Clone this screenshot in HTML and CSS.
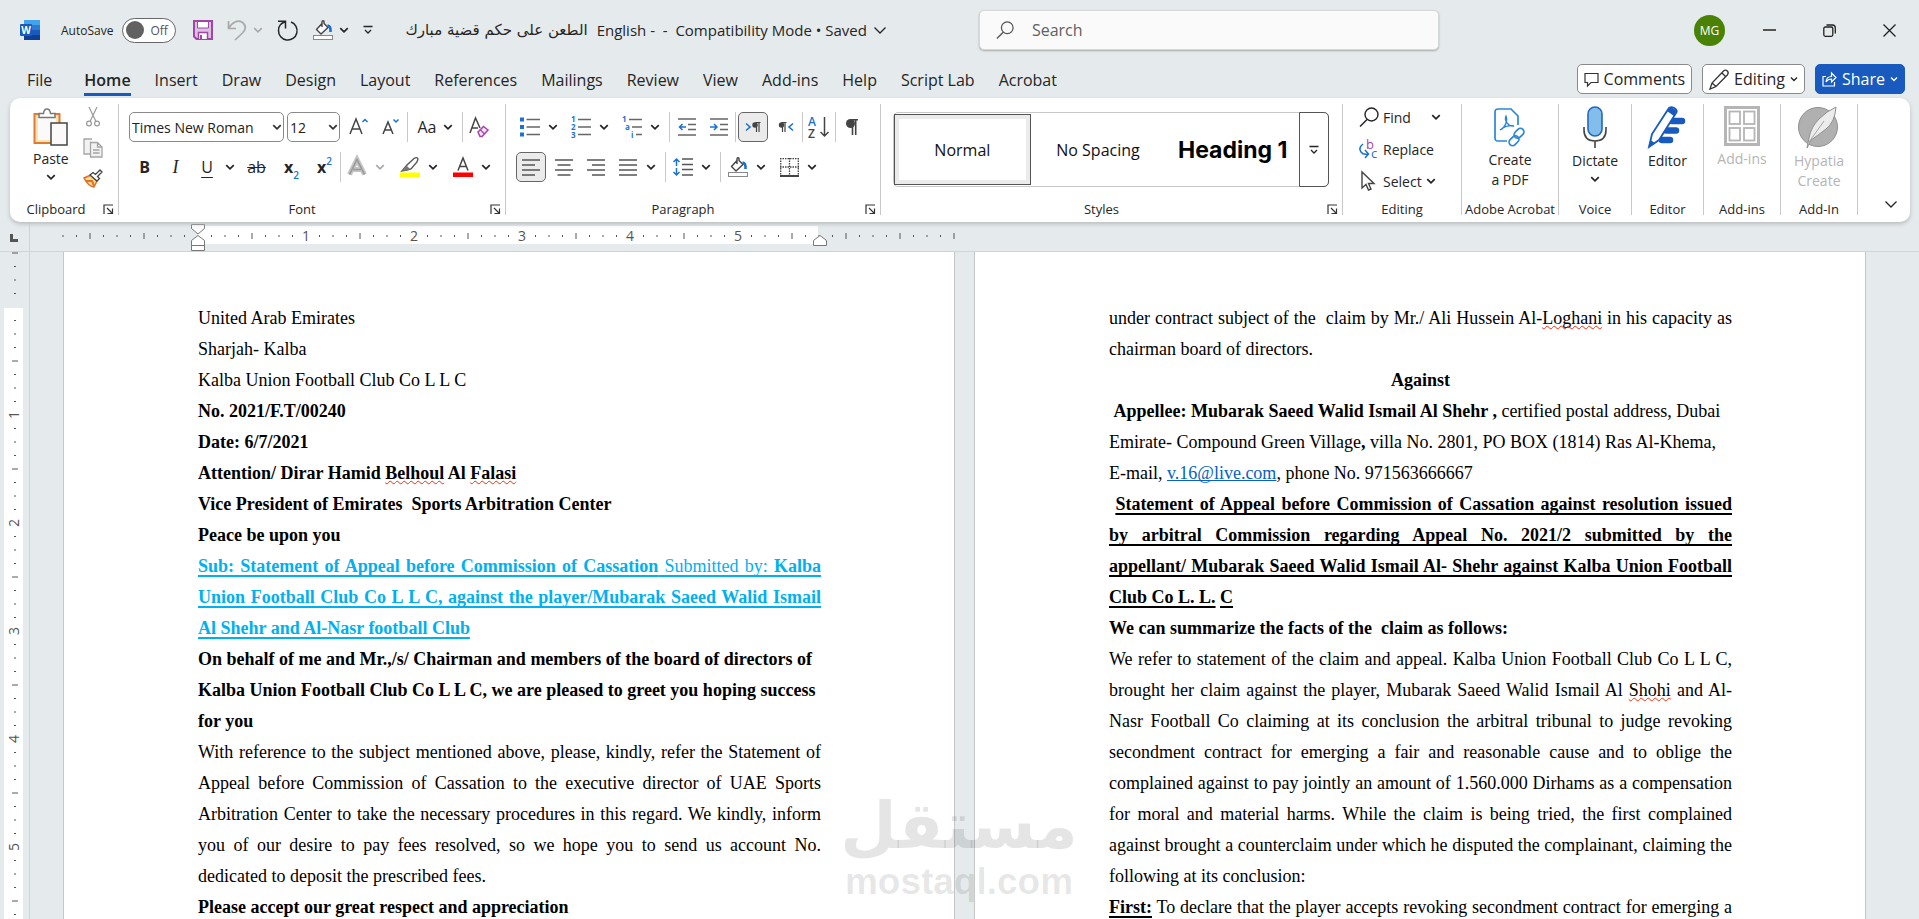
FILE: index.html
```
<!DOCTYPE html>
<html lang="en">
<head>
    <meta charset="UTF-8">
    <title>الطعن على حكم قضية مبارك English - Word</title>
    <link rel="stylesheet" href="styles.css">
</head>
<body>
    <!-- shared icons -->
    <svg class="defs" width="0" height="0">
        <symbol id="chev" viewBox="0 0 8 8"><path d="M1 2.5 4 5.5 7 2.5" fill="none" stroke="currentColor" stroke-width="1.4"/></symbol>
        <symbol id="chev-big" viewBox="0 0 14 14"><path d="M1.500 4.500 7 10 12.500 4.500" fill="none" stroke="currentColor" stroke-width="1.300"/></symbol>
        <symbol id="more" viewBox="0 0 10 10"><path d="M0.500 1.500H9.500M2 5 5 8 8 5" fill="none" stroke="currentColor" stroke-width="1.300"/></symbol>
        <symbol id="launch" viewBox="0 0 11 11"><path d="M1 10V1H10M4 4 9 9M9.500 4.500V9.500H4.500" fill="none" stroke="#333" stroke-width="1.200"/></symbol>
        <symbol id="bucket" viewBox="0 0 20 20">
            <path d="M9 3.500 3.500 9.500 8 14 15 7.500 11 3.500V2Q11 .7 10 .7T9 2V7" fill="#fff" stroke="#444" stroke-width="1.400" stroke-linejoin="round"/>
            <path d="M14.500 5.500Q18 6 17.500 12" fill="none" stroke="#1a6fd0" stroke-width="2.600"/>
            <rect x=".5" y="15.500" width="19" height="4" fill="#fff" stroke="#888"/>
        </symbol>
        <symbol id="glass" viewBox="0 0 20 20"><circle cx="12.500" cy="7.500" r="6.500" fill="none" stroke="currentColor" stroke-width="1.400"/><path d="M8 12.500 1 19.500" stroke="currentColor" stroke-width="1.500"/></symbol>
    </svg>

    <header class="titlebar">
        <svg class="word-logo" width="20" height="20" viewBox="0 0 20 20">
            <rect x="4" y="0" width="16" height="5" fill="#41a5ee"/>
            <rect x="4" y="5" width="16" height="5" fill="#2b7cd3"/>
            <rect x="4" y="10" width="16" height="5" fill="#185abd"/>
            <rect x="4" y="15" width="16" height="5" fill="#103f91"/>
            <rect x="0" y="4" width="12" height="12" rx="1" fill="#185abd"/>
            <text x="6" y="14" class="logo-letter">W</text>
        </svg>
        <label class="autosave">AutoSave
            <span class="switch"><input type="checkbox"><i></i>Off</span>
        </label>
        <div class="qat">
            <button class="qbtn" aria-label="Save">
                <svg width="20" height="20" viewBox="0 0 20 20"><path d="M1 1H19V19H3.500L1 16.500Z" fill="#d9c3dd" stroke="#a344ab" stroke-width="2"/><path d="M4.500 1.500H15.500V8H4.500Z" fill="#fff" stroke="#a344ab"/><path d="M5.500 19V12.500H14.500V19" fill="#fff" stroke="#a344ab" stroke-width="1.500"/><path d="M8 15V19" stroke="#a344ab" stroke-width="2"/></svg>
            </button>
            <button class="qbtn dim" aria-label="Undo">
                <svg width="20" height="21" viewBox="0 0 20 21"><path d="M1.500 1V8.500H9M1.500 8.500C5 2 11-.5 15.500 2.500 20 6 18.500 10 15.500 13L8 20" fill="none" stroke="currentColor" stroke-width="1.700"/></svg>
                <svg width="10" height="10"><use href="#chev"/></svg>
            </button>
            <button class="qbtn" aria-label="Repeat">
                <svg width="22" height="21" viewBox="0 0 22 21"><path d="M1 1.200H8.500V8.500M8.500 1.800C4 3 1.500 6.500 1.500 10.500A9.300 9.300 0 1 0 14 2" fill="none" stroke="currentColor" stroke-width="1.500"/></svg>
            </button>
            <button class="qbtn" aria-label="Shading">
                <svg width="20" height="20"><use href="#bucket"/></svg>
                <svg width="10" height="10"><use href="#chev"/></svg>
            </button>
            <button class="qbtn" aria-label="Customize Quick Access Toolbar"><svg width="10" height="10"><use href="#more"/></svg></button>
        </div>
        <button class="doc-title"><bdi class="ar" lang="ar">الطعن على حكم قضية مبارك</bdi><span>English -&nbsp; -&nbsp; Compatibility Mode • Saved</span><svg width="14" height="14"><use href="#chev-big"/></svg></button>
        <label class="search">
            <svg width="18" height="18"><use href="#glass"/></svg>
            <input type="text" placeholder="Search" aria-label="Search">
        </label>
        <div class="window-controls">
            <button class="avatar">MG</button>
            <button aria-label="Minimize"><svg width="13" height="13" viewBox="0 0 13 13"><path d="M0 6H13" stroke="#222" stroke-width="1.500"/></svg></button>
            <button aria-label="Restore"><svg width="13" height="13" viewBox="0 0 13 13" fill="none" stroke="#222" stroke-width="1.300"><rect x=".8" y="3" width="9" height="9.300" rx="1.500"/><path d="M3.500 1H9.500Q12.300 1 12.300 4V9.500"/></svg></button>
            <button aria-label="Close"><svg width="13" height="13" viewBox="0 0 13 13"><path d="M.5.5 12.500 12.500M12.500.5.5 12.500" stroke="#222" stroke-width="1.300"/></svg></button>
        </div>
    </header>

    <nav class="tabs">
        <a href="#" class="file">File</a>
        <a href="#" class="active">Home</a>
        <a href="#">Insert</a>
        <a href="#">Draw</a>
        <a href="#">Design</a>
        <a href="#">Layout</a>
        <a href="#">References</a>
        <a href="#">Mailings</a>
        <a href="#">Review</a>
        <a href="#">View</a>
        <a href="#">Add-ins</a>
        <a href="#">Help</a>
        <a href="#">Script Lab</a>
        <a href="#">Acrobat</a>
        <div class="tab-actions">
            <button class="action"><svg width="15" height="15" viewBox="0 0 15 15"><path d="M1 1.500H14V10.500H7L3.500 14V10.500H1Z" fill="none" stroke="#333" stroke-width="1.200"/></svg>Comments</button>
            <button class="action"><svg width="20" height="21" viewBox="0 0 20 21"><path d="M1 20 3 14 14.500 2Q16.500.3 18.300 2T18.300 6L7 17.500ZM13 4 16.500 7.500M3 14 7 17.500" fill="none" stroke="#333" stroke-width="1.300"/></svg>Editing<svg width="8" height="8"><use href="#chev"/></svg></button>
            <button class="action share"><svg width="15" height="16" viewBox="0 0 15 16"><path d="M4 5.500H1V15H12.500V11M4 11Q4.500 5.500 9.500 5.500V2L14 6.500 9.500 11V8Q6 8 4 11Z" fill="none" stroke="#fff" stroke-width="1.200"/></svg>Share<svg width="8" height="8"><use href="#chev"/></svg></button>
        </div>
    </nav>

    <section class="ribbon">
        <div class="group clipboard">
            <div class="tools">
                <button class="big paste">
                    <svg width="35" height="38" viewBox="0 0 35 38"><rect x="1.500" y="6" width="25" height="29" fill="#fbe3b2" stroke="#e07b34" stroke-width="2"/><rect x="5" y="9" width="18" height="23" fill="#fafafa"/><path d="M6 9.500V5.500H10.500Q11 1 14 1T17.500 5.500H22V9.500Z" fill="#fff" stroke="#777" stroke-width="1.500"/><rect x="18" y="15" width="16" height="22" fill="#fafafa" stroke="#444" stroke-width="1.500"/></svg>
                    Paste
                    <svg width="10" height="10"><use href="#chev"/></svg>
                </button>
                <div class="stack">
                    <button aria-label="Cut"><svg width="14" height="20" viewBox="0 0 14 20" fill="none" stroke="#9a9a9a" stroke-width="1.200"><path d="M3 0 10 14.500M11 0 4 14.500"/><circle cx="3" cy="16.500" r="2.400"/><circle cx="11" cy="16.500" r="2.400"/></svg></button>
                    <button aria-label="Copy"><svg width="20" height="20" viewBox="0 0 20 20" fill="#f2f2f2" stroke="#a5a5a5" stroke-width="1.300"><path d="M7 16H1V1H9"/><path d="M7.500 4.500H14.500L19 9V19H7.500ZM14.500 4.500V9H19M10 12H16.500M10 15H16.500"/></svg></button>
                    <button aria-label="Format Painter"><svg width="20" height="19" viewBox="0 0 20 19"><path d="M1 9 8 6 14 12 11 18Q5 17 1 9Z" fill="#fbd98f" stroke="#e0702c" stroke-width="1.500"/><path d="M3 12 9 12 11 17" fill="none" stroke="#e0702c" stroke-width="2"/><path d="M7 6 10 3.500 12.500 5.500 17 1 19 3 14.500 7.500 16.500 9.500 14 12Z" fill="#fff" stroke="#444" stroke-width="1.300"/></svg></button>
                </div>
            </div>
            <div class="caption">Clipboard<button class="launcher" aria-label="Clipboard options"><svg width="11" height="11"><use href="#launch"/></svg></button></div>
        </div>

        <div class="group font">
            <div class="tools rows">
                <div class="row">
                    <select class="combo name" aria-label="Font"><option>Times New Roman</option></select>
                    <select class="combo size" aria-label="Font size"><option>12</option></select>
                    <button class="tool" aria-label="Grow font"><svg width="20" height="20" viewBox="0 0 20 20" fill="none"><path d="M1 17 7 2 13 17M3 12H11" stroke="#444" stroke-width="1.500"/><path d="M13.500 5 16 2.500 18.500 5" stroke="#1a73d0" stroke-width="1.500"/></svg></button>
                    <button class="tool" aria-label="Shrink font"><svg width="20" height="20" viewBox="0 0 20 20" fill="none"><path d="M2 17 7 5 12 17M4 13H10" stroke="#444" stroke-width="1.500"/><path d="M12.500 2.500 15 5 17.500 2.500" stroke="#1a73d0" stroke-width="1.500"/></svg></button>
                    <i class="sep"></i>
                    <button class="tool split change-case">Aa<svg width="10" height="10"><use href="#chev"/></svg></button>
                    <i class="sep"></i>
                    <button class="tool" aria-label="Clear formatting"><svg width="20" height="22" viewBox="0 0 20 22" fill="none"><path d="M1 17 6.500 2 11 12M3 12H9" stroke="#444" stroke-width="1.500"/><path d="M9 16 14.500 10.500 19 14 13 20.500H11Z" fill="#f3e3f5" stroke="#a344ab" stroke-width="1.500"/><path d="M11 13.500 15.500 18" stroke="#a344ab" stroke-width="1.300"/></svg></button>
                </div>
                <div class="row">
                    <button class="tool thin"><b>B</b></button>
                    <button class="tool thin italic">I</button>
                    <button class="tool split"><span class="slot"><u>U</u></span><svg width="10" height="10"><use href="#chev"/></svg></button>
                    <button class="tool wide"><s>ab</s></button>
                    <button class="tool wide"><b>x</b><sub>2</sub></button>
                    <button class="tool thin"><b>x</b><sup>2</sup></button>
                    <i class="sep"></i>
                    <button class="tool split dim" aria-label="Text effects"><span class="slot"><svg width="20" height="20" viewBox="0 0 20 20"><path d="M2.500 17.500 10 2.500 17.500 17.500M6 12.500H14" fill="none" stroke="#c4c4c4" stroke-width="5"/><path d="M2.500 17.500 10 2.500 17.500 17.500M6 12.500H14" fill="none" stroke="#999" stroke-width="1.600"/></svg></span><svg width="10" height="10"><use href="#chev"/></svg></button>
                    <button class="tool split apart" aria-label="Highlight"><span class="slot"><svg width="20" height="20" viewBox="0 0 20 20"><path d="M2 14 7 8 14 1.500Q17-.5 18 2L17 5 11 12 7 13Z" fill="#fff" stroke="#555" stroke-width="1.400"/><path d="M2 14 6.500 8.500 10.500 12.500 7 13.500Z" fill="#777"/><rect y="15.500" width="20" height="4.500" fill="#ff0"/></svg></span><svg width="10" height="10"><use href="#chev"/></svg></button>
                    <button class="tool split apart" aria-label="Font color"><span class="slot"><svg width="20" height="20" viewBox="0 0 20 20"><path d="M5 13.500 10 1 15 13.500M6.500 9.500H13.500" fill="none" stroke="#444" stroke-width="1.500"/><rect y="15.500" width="20" height="4.500" fill="#f00"/></svg></span><svg width="10" height="10"><use href="#chev"/></svg></button>
                </div>
            </div>
            <div class="caption">Font<button class="launcher" aria-label="Font options"><svg width="11" height="11"><use href="#launch"/></svg></button></div>
        </div>

        <div class="group paragraph">
            <div class="tools rows">
                <div class="row">
                    <button class="tool split" aria-label="Bullets"><span class="slot"><svg width="20" height="20" viewBox="0 0 20 20"><path d="M0 2.500H4M0 10H4M0 17.500H4" stroke="#1a73d0" stroke-width="4"/><path d="M6.500 2.500H20M6.500 10H20M6.500 17.500H20" stroke="#666" stroke-width="1.500"/></svg></span><svg width="10" height="10"><use href="#chev"/></svg></button>
                    <button class="tool split gap" aria-label="Numbering"><span class="slot"><svg width="20" height="22" viewBox="0 0 20 22"><text class="mini" x="0" y="6">1</text><text class="mini" x="0" y="14">2</text><text class="mini" x="0" y="22">3</text><path d="M7 3.500H20M7 11H20M7 18.500H20" stroke="#666" stroke-width="1.500"/></svg></span><svg width="10" height="10"><use href="#chev"/></svg></button>
                    <button class="tool split gap" aria-label="Multilevel list"><span class="slot"><svg width="20" height="22" viewBox="0 0 20 22"><text class="mini" x="0" y="6">1</text><text class="mini" x="3" y="14">a</text><text class="mini" x="9" y="22">i</text><path d="M7 3.500H20M10 11H20M14 18.500H20" stroke="#666" stroke-width="1.500"/></svg></span><svg width="10" height="10"><use href="#chev"/></svg></button>
                    <i class="sep after-split"></i>
                    <button class="tool" aria-label="Decrease indent"><svg width="18" height="18" viewBox="0 0 18 18"><path d="M0 1H18M10 6.500H18M10 11.500H18M0 17H18" stroke="#666" stroke-width="1.500"/><path d="M8 9H1.500M4.500 6 1.500 9 4.500 12" fill="none" stroke="#1a73d0" stroke-width="1.500"/></svg></button>
                    <button class="tool" aria-label="Increase indent"><svg width="18" height="18" viewBox="0 0 18 18"><path d="M0 1H18M10 6.500H18M10 11.500H18M0 17H18" stroke="#666" stroke-width="1.500"/><path d="M0 9H7M4 6 7 9 4 12" fill="none" stroke="#1a73d0" stroke-width="1.500"/></svg></button>
                    <i class="sep"></i>
                    <button class="tool pressed" aria-label="Left-to-right"><svg width="16" height="12" viewBox="0 0 16 12"><path d="M1 2.500 5 6 1 9.500" fill="none" stroke="#1a73d0" stroke-width="1.600"/><path d="M15.500 1.500H10.500M11.500 1V11M14 1V11" stroke="#444" stroke-width="1.200"/><circle cx="10" cy="4" r="2.700" fill="#444"/></svg></button>
                    <button class="tool" aria-label="Right-to-left"><svg width="16" height="12" viewBox="0 0 16 12"><path d="M15 2.500 11 6 15 9.500" fill="none" stroke="#1a73d0" stroke-width="1.600"/><path d="M8.500 1.500H3.500M4.500 1V11M7 1V11" stroke="#444" stroke-width="1.200"/><circle cx="3.500" cy="4" r="2.700" fill="#444"/></svg></button>
                    <i class="sep"></i>
                    <button class="tool" aria-label="Sort"><svg width="22" height="22" viewBox="0 0 22 22"><text class="sort-a" x="0" y="10">A</text><text class="sort-z" x="0" y="22">Z</text><path d="M16.500 1V20M12.500 16 16.500 20 20.500 16" fill="none" stroke="#444" stroke-width="1.500"/></svg></button>
                    <i class="sep"></i>
                    <button class="tool" aria-label="Show paragraph marks"><svg width="12" height="16" viewBox="0 0 12 16"><path d="M12 .8H5M6.500 0V16M9.700 0V16" stroke="#444" stroke-width="1.600"/><circle cx="4.500" cy="4.500" r="4.500" fill="#444"/></svg></button>
                </div>
                <div class="row">
                    <button class="tool pressed" aria-label="Align left"><svg width="18" height="17" viewBox="0 0 18 17"><path d="M0 1H18M0 6H13M0 11H18M0 16H13" stroke="#555" stroke-width="1.500"/></svg></button>
                    <button class="tool" aria-label="Center"><svg width="18" height="17" viewBox="0 0 18 17"><path d="M0 1H18M2.500 6H15.500M0 11H18M2.500 16H15.500" stroke="#555" stroke-width="1.500"/></svg></button>
                    <button class="tool" aria-label="Align right"><svg width="18" height="17" viewBox="0 0 18 17"><path d="M0 1H18M5 6H18M0 11H18M5 16H18" stroke="#555" stroke-width="1.500"/></svg></button>
                    <button class="tool split" aria-label="Justify"><span class="slot"><svg width="18" height="17" viewBox="0 0 18 17"><path d="M0 1H18M0 6H18M0 11H18M0 16H18" stroke="#555" stroke-width="1.500"/></svg></span><svg width="10" height="10"><use href="#chev"/></svg></button>
                    <i class="sep after-split"></i>
                    <button class="tool split" aria-label="Line spacing"><span class="slot"><svg width="20" height="18" viewBox="0 0 20 18"><path d="M9 1H20M9 6.500H20M9 11.500H20M9 17H20" stroke="#555" stroke-width="1.500"/><path d="M3.500 8V1M.5 4 3.500 1 6.500 4M3.500 10V17M.5 14 3.500 17 6.500 14" fill="none" stroke="#1a73d0" stroke-width="1.500"/></svg></span><svg width="10" height="10"><use href="#chev"/></svg></button>
                    <i class="sep after-split"></i>
                    <button class="tool split" aria-label="Shading"><span class="slot"><svg width="20" height="20"><use href="#bucket"/></svg></span><svg width="10" height="10"><use href="#chev"/></svg></button>
                    <button class="tool split gap" aria-label="Borders"><span class="slot"><svg width="19" height="19" viewBox="0 0 19 19"><path d="M.7 0V17M9.500 0V17M18.300 0V17M0 .7H19M0 9H19" stroke="#444" stroke-width="1.300" stroke-dasharray="1.500 1"/><path d="M0 18H19" stroke="#444" stroke-width="2"/></svg></span><svg width="10" height="10"><use href="#chev"/></svg></button>
                </div>
            </div>
            <div class="caption">Paragraph<button class="launcher" aria-label="Paragraph options"><svg width="11" height="11"><use href="#launch"/></svg></button></div>
        </div>

        <div class="group styles">
            <div class="tools">
                <div class="gallery">
                    <button class="style selected">Normal</button>
                    <button class="style">No Spacing</button>
                    <button class="style heading">Heading 1</button>
                    <button class="gallery-more" aria-label="More styles"><svg width="10" height="10"><use href="#more"/></svg></button>
                </div>
            </div>
            <div class="caption">Styles<button class="launcher" aria-label="Styles options"><svg width="11" height="11"><use href="#launch"/></svg></button></div>
        </div>

        <div class="group editing">
            <div class="tools list">
                <button><svg width="20" height="20"><use href="#glass"/></svg>Find<svg class="far" width="10" height="10"><use href="#chev"/></svg></button>
                <button><svg width="20" height="20" viewBox="0 0 20 20"><text class="rep-b" x="7" y="10">b</text><text class="rep-c" x="12" y="19">c</text><path d="M4 5Q-1 9 2 13 4 16 9 15M6 11 9.500 15 6 19" fill="none" stroke="#1a73d0" stroke-width="1.500"/></svg>Replace</button>
                <button><svg width="20" height="20" viewBox="0 0 20 20"><path d="M3 1V17L7 13.500 9.500 19 12 18 9.500 12.500H15Z" fill="#fff" stroke="#444" stroke-width="1.400"/></svg>Select<svg width="10" height="10"><use href="#chev"/></svg></button>
            </div>
            <div class="caption">Editing</div>
        </div>

        <div class="group acrobat">
            <div class="tools">
                <button class="big pdf">
                    <svg width="32" height="39" viewBox="0 0 32 39" fill="none" stroke="#2a86d9" stroke-width="1.700"><path d="M13 33H4Q1 33 1 30V4Q1 1 4 1H17L24 8V17"/><path d="M6 22C11 20 14 13 12 8 10 12 14 19 20 18 15 17 10 19 6 22Z" stroke-width="1.300"/><rect x="20" y="22" width="11" height="7" rx="3.500" transform="rotate(-45 25 26)"/><rect x="14" y="29" width="11" height="7" rx="3.500" transform="rotate(-45 20 32)"/></svg>
                    <span>Create<br>a PDF</span>
                </button>
            </div>
            <div class="caption">Adobe Acrobat</div>
        </div>
        <div class="group voice">
            <div class="tools">
                <button class="big">
                    <svg width="24" height="42" viewBox="0 0 24 42" fill="none"><path d="M1 21V24Q1 35 12 35T23 24V21M12 35V42" stroke="#444" stroke-width="1.600"/><rect x="5" y="1" width="14" height="29" rx="7" fill="#83bdec" stroke="#2468bd" stroke-width="1.600"/></svg>
                    Dictate
                    <svg width="10" height="10"><use href="#chev"/></svg>
                </button>
            </div>
            <div class="caption">Voice</div>
        </div>
        <div class="group editor">
            <div class="tools">
                <button class="big">
                    <svg width="38" height="42" viewBox="0 0 38 42"><path d="M24 15H34M18 24.500H28M14 34H22" stroke="#185abd" stroke-width="6.500" stroke-linecap="round"/><path d="M1 41 4 28 21 2Q24 0 27 2.500T28 7L11 34Z" fill="#fff" stroke="#185abd" stroke-width="1.800"/><path d="M19 5 23 .8 29 5 26 10ZM1 41 2.500 34 7 37Z" fill="#185abd"/></svg>
                    Editor
                </button>
            </div>
            <div class="caption">Editor</div>
        </div>
        <div class="group addins">
            <div class="tools">
                <button class="big" disabled>
                    <svg width="36" height="40" viewBox="0 0 36 40" fill="none" stroke="#b5b5b5" stroke-width="1.800"><rect x="1.500" y="1.500" width="33" height="37" stroke-width="3"/><rect x="5.500" y="5.500" width="10.500" height="12.500"/><rect x="20" y="5.500" width="10.500" height="12.500"/><rect x="5.500" y="22" width="10.500" height="12.500"/><rect x="20" y="22" width="10.500" height="12.500"/></svg>
                    Add-ins
                </button>
            </div>
            <div class="caption">Add-ins</div>
        </div>
        <div class="group addins">
            <div class="tools">
                <button class="big" disabled>
                    <svg width="41" height="42" viewBox="0 0 41 42"><circle cx="20" cy="21" r="19.500" fill="#b0b0b0" stroke="#909090"/><path d="M9 42 11 32Q13 21 21 13T38 1Q37 16 28 23T13 34Z" fill="#ececec" stroke="#909090"/><path d="M11 36 26 15" stroke="#a5a5a5"/></svg>
                    <span>Hypatia<br>Create</span>
                </button>
            </div>
            <div class="caption">Add-In</div>
        </div>
        <button class="collapse" aria-label="Collapse ribbon"><svg width="14" height="14"><use href="#chev-big"/></svg></button>
    </section>

    <!-- one inch is 108 units, ticks every eighth -->
    <div class="hruler">
        <svg width="960" height="29" viewBox="0 0 960 29">
            <defs>
                <pattern id="ht" x="198" y="0" width="108" height="29" patternUnits="userSpaceOnUse">
                    <path d="M13.500 13V15M27 13V15M40.500 13V15M67.500 13V15M81 13V15M94.500 13V15" stroke="#555"/>
                    <path d="M54 11V17" stroke="#555"/>
                </pattern>
            </defs>
            <rect x="198" y="4" width="620" height="18" fill="#fff"/>
            <rect x="60" y="0" width="896" height="29" fill="url(#ht)"/>
            <path d="M90 11V17M846 11V17M954 11V17" stroke="#555"/>
            <text x="306" y="19">1</text>
            <text x="414" y="19">2</text>
            <text x="522" y="19">3</text>
            <text x="630" y="19">4</text>
            <text x="738" y="19">5</text>
            <g fill="#fff" stroke="#777">
                <path d="M191.500 2.500H204.500V6.500L198 12 191.500 6.500Z"/>
                <path d="M191.500 23.500V18.500L198 13.500 204.500 18.500V23.500ZM191.500 23.500H204.500V28.500H191.500Z"/>
                <path d="M813.500 23.500V18.500L820 13.500 826.500 18.500V23.500Z"/>
            </g>
            <path d="M11.500 12V18.500H18" fill="none" stroke="#555" stroke-width="3"/>
            <path d="M29.500 0V29" stroke="#d0d4d5"/>
        </svg>
    </div>

    <main class="workspace">
        <div class="vruler">
            <svg width="29" height="780" viewBox="0 0 29 780">
                <defs>
                    <pattern id="vt" x="0" y="55" width="29" height="108" patternUnits="userSpaceOnUse">
                        <path d="M14 13.500H16M14 27H16M14 40.500H16M14 67.500H16M14 81H16M14 94.500H16M12 54H18" stroke="#555"/>
                    </pattern>
                </defs>
                <rect x="4" y="56" width="19" height="724" fill="#fff"/>
                <rect width="29" height="780" fill="url(#vt)"/>
                <text transform="translate(19 163) rotate(-90)">1</text>
                <text transform="translate(19 271) rotate(-90)">2</text>
                <text transform="translate(19 379) rotate(-90)">3</text>
                <text transform="translate(19 487) rotate(-90)">4</text>
                <text transform="translate(19 595) rotate(-90)">5</text>
            </svg>
        </div>
        <div class="pages">
            <article class="page">
                <p>United Arab Emirates</p>
                <p>Sharjah- Kalba</p>
                <p>Kalba Union Football Club Co L L C</p>
                <p><b>No. 2021/F.T/00240</b></p>
                <p><b>Date: 6/7/2021</b></p>
                <p><b>Attention/ Dirar Hamid <span class="typo">Belhoul</span> Al <span class="typo">Falasi</span></b></p>
                <p><b>Vice President of Emirates&nbsp; Sports Arbitration Center</b></p>
                <p><b>Peace be upon you</b></p>
                <p class="justify subject"><b>Sub: Statement of Appeal before Commission of Cassation</b> Submitted by: <b>Kalba Union Football Club Co L L C, against the player/Mubarak Saeed Walid Ismail Al Shehr and Al-Nasr football Club</b></p>
                <p><b>On behalf of me and Mr.,/s/ Chairman and members of the board of directors of Kalba Union Football Club Co L L C, we are pleased to greet you hoping success for you</b></p>
                <p class="justify">With reference to the subject mentioned above, please, kindly, refer the Statement of Appeal before Commission of Cassation to the executive director of UAE Sports Arbitration Center to take the necessary procedures in this regard. We kindly, inform you of our desire to pay fees resolved, so we hope you to send us account No. dedicated to deposit the prescribed fees.</p>
                <p><b>Please accept our great respect and appreciation</b></p>
            </article>
            <article class="page">
                <p class="justify">under contract subject of the&nbsp; claim by Mr./ Ali Hussein Al-<span class="typo">Loghani</span> in his capacity as chairman board of directors.</p>
                <p class="center"><b>Against</b></p>
                <p>&nbsp;<b>Appellee: Mubarak Saeed Walid Ismail Al Shehr ,</b> certified postal address, Dubai Emirate- Compound Green Village<b>,</b> villa No. 2801, PO BOX (1814) Ras Al-Khema, E-mail, <a href="mailto:v.16@live.com">v.16@live.com</a>, phone No. 971563666667</p>
                <p class="justify">&nbsp;<b class="under">Statement of Appeal before Commission of Cassation against resolution issued by arbitral Commission regarding Appeal No. 2021/2 submitted by the appellant/&nbsp;Mubarak Saeed Walid Ismail Al- Shehr against Kalba Union Football Club Co L. L.</b> <b class="under">C</b></p>
                <p><b>We can summarize the facts of the&nbsp; claim as follows:</b></p>
                <p class="justify">We refer to statement of the claim and appeal. Kalba Union Football Club Co L L C, brought her claim against the player, Mubarak Saeed Walid Ismail Al <span class="typo">Shohi</span> and Al-Nasr Football Co claiming at its conclusion the arbitral tribunal to judge revoking secondment contract for emerging a fair and reasonable cause and to oblige the complained against to pay jointly an amount of 1.560.000 Dirhams as a compensation for moral and material harms. While the claim is being tried, the first complained against brought a counterclaim under which he disputed the complainant, claiming the following at its conclusion:</p>
                <p class="justify full"><b class="under">First:</b> To declare that the player accepts revoking secondment contract for emerging a</p>
            </article>
        </div>
        <div class="watermark"><span class="mark-ar" lang="ar">مستقل</span><span>mostaql.com</span></div>
    </main>
</body>
</html>
```
FILE: styles.css
```
* { box-sizing: border-box; }
body {
    margin: 0;
    height: 100vh;
    display: flex;
    flex-direction: column;
    overflow: hidden;
    background: #e5eaec;
    color: #252525;
    font-family: "Open Sans", "Noto Sans", sans-serif;
    font-size: 14px;
}
button { font: inherit; color: inherit; background: none; border: none; padding: 0; margin: 0; }
svg { flex: none; overflow: visible; }
.defs { position: absolute; }
.dim { color: #aaa; }

/* title bar */
.titlebar { display: flex; align-items: center; height: 60px; flex: none; padding-left: 20px; }
.logo-letter { font: bold 10px "Open Sans", sans-serif; fill: #fff; text-anchor: middle; }
.autosave { display: flex; align-items: center; gap: 9px; margin-left: 21px; font-size: 12px; }
.switch { display: flex; align-items: center; gap: 6px; width: 54px; height: 25px; padding-left: 3px; border: 1px solid #666; border-radius: 13px; background: #fff; color: #555; }
.switch input { position: absolute; opacity: 0; }
.switch i { width: 18px; height: 18px; border-radius: 50%; background: #616161; }
.qat { display: flex; align-items: center; gap: 14px; margin-left: 17px; }
.qbtn { display: flex; align-items: center; gap: 6px; height: 30px; }
.doc-title { display: flex; align-items: center; gap: 6px; margin-left: 32px; font-size: 15px; white-space: nowrap; }
.doc-title .ar { font-family: "DejaVu Sans", sans-serif; font-size: 15px; margin-right: 3px; }
.search { display: flex; align-items: center; gap: 16px; width: 460px; height: 40px; margin-left: 92px; padding: 0 16px; background: #fafafa; border: 1px solid #d5d8d9; border-radius: 5px; box-shadow: 0 1px 2px #aaa; color: #555; }
.search input { flex: 1; border: none; background: none; outline: none; font: 16px "Open Sans", sans-serif; }
.search input::placeholder { color: #616161; }
.window-controls { display: flex; align-items: center; gap: 47px; margin-left: auto; padding-right: 23px; }
.window-controls button { display: flex; }
.window-controls .avatar { width: 31px; height: 31px; margin-right: -9px; align-items: center; justify-content: center; border-radius: 50%; background: #498205; color: #fff; font-size: 12px; }

/* tabs */
.tabs { display: flex; align-items: center; gap: 24px; flex: none; height: 38px; padding: 0 14px 0 27px; font-size: 16px; white-space: nowrap; }
.tabs a { color: inherit; text-decoration: none; padding-top: 4px; line-height: 26px; border-bottom: 3px solid transparent; }
.tabs .file { margin-right: 8px; }
.tabs .active { font-weight: 600; border-color: #185abd; }
.tab-actions { display: flex; gap: 10px; margin-left: auto; }
.action { display: flex; align-items: center; gap: 5px; height: 30px; padding: 0 6px; border: 1px solid #8a8a8a; border-radius: 5px; background: #fff; }
.action.share { background: #185abd; border-color: #185abd; color: #fff; }

/* ribbon */
.ribbon { display: flex; flex: none; height: 124px; margin: 0 9px 0 10px; padding: 6px 0 7px; background: #fff; border-radius: 10px; box-shadow: 0 2px 4px #b8bcbe; position: relative; white-space: nowrap; }
.group { display: flex; flex-direction: column; flex: none; border-right: 1px solid #c8c8c8; }
.tools { flex: 1; display: flex; justify-content: center; }
.caption { position: relative; height: 12px; line-height: 12px; font-size: 13px; text-align: center; }
.launcher { position: absolute; right: 4px; top: 1px; line-height: 0; }
.clipboard { width: 109px; }
.clipboard .caption { padding-right: 16px; }
.clipboard .tools { justify-content: flex-start; padding-left: 23px; gap: 14px; }
.font { width: 387px; }
.paragraph { width: 375px; }
.styles { flex: 1; }
.font .caption, .paragraph .caption, .styles .caption { padding-right: 20px; }
.editing { width: 119px; }
.acrobat { width: 97px; }
.voice { width: 73px; }
.editor { width: 72px; }
.addins { width: 77px; }

.big { display: flex; flex-direction: column; align-items: center; gap: 3px; padding-top: 2px; align-self: flex-start; line-height: 20px; }
.big:disabled { color: #b5b5b5; }
.pdf, .paste { padding-top: 4px; }
.stack { display: flex; flex-direction: column; gap: 11px; padding: 3px 0 0; }
.stack button { display: flex; justify-content: center; width: 20px; }

.rows { flex-direction: column; justify-content: flex-start; gap: 10px; padding: 8px 10px 0; }
.paragraph .rows { padding-left: 8px; }
.row { display: flex; align-items: center; height: 30px; }
.tool { display: flex; align-items: center; justify-content: center; width: 32px; height: 30px; font-size: 16px; }
.tool.thin { width: 31px; }
.tool.wide { width: 35px; }
.tool.split { width: 48px; justify-content: flex-start; }
.tool.split.gap { margin-left: 3px; }
.tool.split.apart { margin-left: 5px; }
.tool.change-case { width: 54px; justify-content: center; gap: 6px; }
.slot { display: flex; justify-content: center; width: 32px; margin-right: 2px; }
.tool.pressed { width: 30px; margin: 0 2px; background: #ebebeb; border: 1px solid #666; border-radius: 5px; }
.tool.italic { font: italic 18px "Liberation Serif", serif; }
.tool u { text-underline-offset: 4px; text-decoration-skip-ink: none; }
.tool sub, .tool sup { font-size: 10px; font-weight: 600; color: #1a73d0; line-height: 10px; }
.tool sub { align-self: flex-end; margin-bottom: 2px; }
.tool sup { align-self: flex-start; margin-top: 4px; }
.sep { width: 1px; height: 30px; background: #c8c8c8; }
.sep.after-split { margin: 0 1px 0 5px; }
.combo { appearance: none; height: 30px; padding: 0 2px; border: 1px solid #8a8a8a; border-radius: 5px; color: #222; font: 14px "Open Sans", sans-serif; background: #fff url("data:image/svg+xml,%3Csvg xmlns='http://www.w3.org/2000/svg' width='10' height='10' viewBox='0 0 8 8'%3E%3Cpath d='M1 2.5 4 5.5 7 2.5' fill='none' stroke='%23333' stroke-width='1.4'/%3E%3C/svg%3E") no-repeat right 1px center; }
.combo.name { width: 155px; }
.combo.size { width: 53px; margin: 0 3px; }
.mini { font: bold 8px "Open Sans", sans-serif; fill: #1a73d0; }
.sort-a { font: 600 12px "Open Sans", sans-serif; fill: #1a73d0; }
.sort-z { font: 600 12px "Open Sans", sans-serif; fill: #444; }
.rep-b { font: 13px "Open Sans", sans-serif; fill: #a344ab; }
.rep-c { font: 13px "Open Sans", sans-serif; fill: #1a73d0; }

.gallery { flex: 1; display: flex; height: 75px; margin: 8px 13px 0 12px; border: 1px solid #c8c8c8; border-radius: 5px; }
.style { flex: 1; margin: 1px 0; font-size: 16px; color: #111; }
.style.selected { border: 1px solid #555; outline: 4px solid #ebebeb; outline-offset: -5px; }
.style.heading { font: bold 23px Inter, sans-serif; color: #000; }
.gallery-more { width: 30px; margin: -1px; border: 1px solid #555; border-radius: 0 5px 5px 0; }

.list { flex-direction: column; justify-content: flex-start; gap: 6px; padding-left: 16px; }
.list button { display: flex; align-items: center; gap: 4px; height: 26px; }
.list .far { margin-left: 16px; }
.collapse { width: 52px; align-self: flex-end; line-height: 0; padding: 0 0 4px 14px; }

/* rulers */
.hruler { flex: none; height: 30px; border-bottom: 1px solid #d0d4d5; line-height: 0; }
.hruler text, .vruler text { font: 14px "Open Sans", sans-serif; fill: #555; text-anchor: middle; }
.vruler { flex: none; width: 30px; border-right: 1px solid #d0d4d5; overflow: hidden; }

/* document */
.workspace { position: relative; flex: 1; min-height: 0; display: flex; overflow: hidden; }
.pages { display: flex; gap: 19px; padding-left: 33px; }
.page { flex: none; width: 892px; padding: 51px 133px 0 134px; background: #fff; border: solid #c6c6c6; border-width: 0 1px; color: #000; font: 18px/31px "Liberation Serif", "Times New Roman", serif; }
.page p { margin: 0; }
.justify { text-align: justify; }
.full { text-align-last: justify; }
.center { text-align: center; }
.page a { color: #0563c1; text-decoration-skip-ink: none; }
.subject { color: #00b0f0; text-decoration: underline 2px; text-decoration-skip-ink: none; text-underline-offset: 3px; }
.under { text-decoration: underline 2px; text-decoration-skip-ink: none; text-underline-offset: 3px; }
.typo { text-decoration: underline wavy #f03010 1px; text-decoration-skip-ink: none; text-underline-offset: 1px; }
.watermark { position: absolute; left: 844px; bottom: 17px; width: 230px; display: flex; flex-direction: column; align-items: center; color: rgba(0, 0, 0, 0.1); font: bold 37px/40px "Liberation Sans", sans-serif; }
.mark-ar { font: bold 65px/72px "DejaVu Sans", sans-serif; }
```
